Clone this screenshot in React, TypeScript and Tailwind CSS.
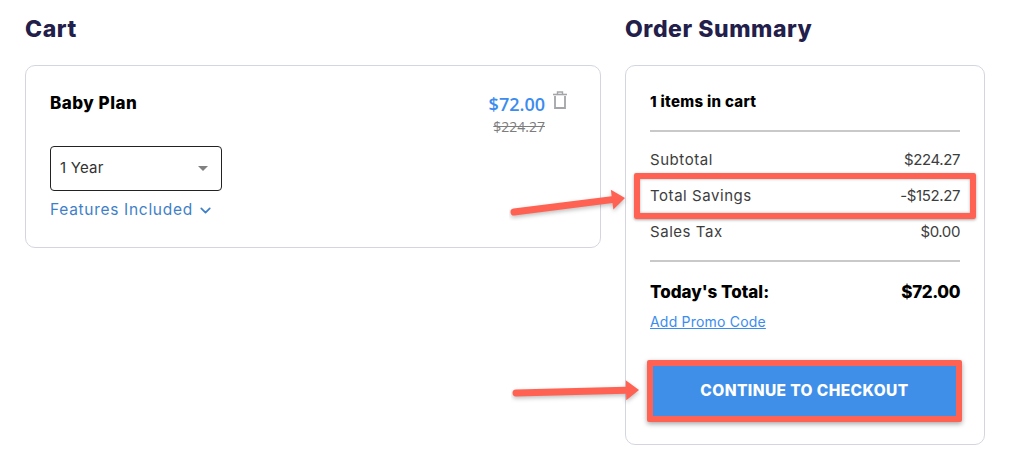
import { ChevronDown } from "lucide-react";

const Arrow = ({ className, x2, y1, y2, w, h }: { className: string; x2: number; y1: number; y2: number; w: number; h: number }) => {
  const dx = x2 - 5;
  const dy = y2 - y1;
  const len = Math.sqrt(dx * dx + dy * dy);
  const ux = dx / len;
  const uy = dy / len;
  const bx = x2 - ux * 13;
  const by = y2 - uy * 13;
  const px = -uy * 10;
  const py = ux * 10;
  return (
    <svg className={className} width={w} height={h} viewBox={`0 0 ${w} ${h}`} fill="none">
      <g filter="drop-shadow(0 2px 2px rgba(0,0,0,0.25))">
        <line x1="5" y1={y1} x2={bx} y2={by} stroke="#ff6252" strokeWidth="7" strokeLinecap="round" />
        <polygon points={`${x2},${y2} ${bx + px},${by + py} ${bx - px},${by - py}`} fill="#ff6252" />
      </g>
    </svg>
  );
};

const Row = ({ label, value }: { label: string; value: string }) => (
  <div className="flex h-9 items-center justify-between text-[15px] text-[#3d3d3d]">
    <span className="tracking-[0.55px]">{label}</span>
    <span className="tracking-[-0.4px]">{value}</span>
  </div>
);

export default function App() {
  return (
    <div className="relative flex h-[464px] w-[1016px] gap-6 overflow-hidden bg-white pl-[25px] font-['Inter',sans-serif]">
      <section className="w-[576px]">
        <h2 className="flex h-[65px] items-start pt-[12px] text-[23px] font-extrabold leading-[34px] tracking-[0.55px] text-[#22204a]">Cart</h2>
        <div className="h-[183px] rounded-[10px] border border-[#d3d6e2] pl-6 pr-[32px] pt-6">
          <div className="flex items-start justify-between">
            <h3 className="text-[17px] font-extrabold leading-[26px] tracking-[0.5px] text-black">Baby Plan</h3>
            <div className="flex flex-col items-end">
              <div className="flex items-start gap-[7px]">
                <span className="font-['Open_Sans',sans-serif] text-[18px] font-semibold leading-[28px] text-[#3b8cee]">$72.00</span>
                <svg width="16" height="18" viewBox="0 0 16 18" fill="none" stroke="#a3a5a8" className="mt-[1px]">
                  <path d="M1 3.5h14" strokeWidth="1.6" />
                  <path d="M5.5 3V1h5v2" strokeWidth="1.4" />
                  <path d="M3 5v12h10V5" strokeWidth="1.8" />
                </svg>
              </div>
              <span className="mr-[23px] font-['Open_Sans',sans-serif] text-[14px] leading-[18px] text-[#7d7d7d] line-through">$224.27</span>
            </div>
          </div>
          <div className="mt-[10px] flex h-[45px] w-[172px] items-center justify-between rounded-[4px] border border-[#222] pl-[9px] pr-[13px] text-[15px] tracking-[0.2px] text-[#333]">
            <span>1 Year</span>
            <span className="h-0 w-0 border-x-[5px] border-t-[5px] border-x-transparent border-t-[#808080]" />
          </div>
          <div className="mt-[8px] flex items-center gap-[4px] text-[15.5px] leading-[22px] tracking-[0.7px] text-[#3f7fc9]">
            <span>Features Included</span>
            <ChevronDown size={17} strokeWidth={2.4} />
          </div>
        </div>
      </section>

      <section className="w-[360px]">
        <h2 className="flex h-[65px] items-start pt-[12px] text-[23px] font-extrabold leading-[34px] tracking-[0.55px] text-[#22204a]">Order Summary</h2>
        <div className="h-[380px] rounded-[10px] border border-[#d3d6e2] px-6 pt-[24px]">
          <div className="text-[15px] font-extrabold leading-6 tracking-[0.3px] text-black">1 items in cart</div>
          <div className="mt-[16px] h-[2px] bg-[#c9c9c9]" />
          <div className="mt-[10px]">
            <Row label="Subtotal" value="$224.27" />
            <div className="relative">
              <Row label="Total Savings" value="-$152.27" />
              <div className="absolute -inset-x-[16px] -inset-y-[5px] rounded-[2px] border-[6px] border-[#ff6252] shadow-[0_1px_3px_rgba(0,0,0,0.35),inset_0_0_3px_rgba(0,0,0,0.3)]" />
            </div>
            <Row label="Sales Tax" value="$0.00" />
          </div>
          <div className="mt-[10px] h-[2px] bg-[#c9c9c9]" />
          <div className="mt-[18px] flex items-center justify-between text-[17px] font-extrabold leading-6 text-black">
            <span>Today's Total:</span>
            <span className="tracking-[-0.4px]">$72.00</span>
          </div>
          <a className="mt-2 block text-[14px] leading-5 tracking-[0.2px] text-[#3b8cee] underline">Add Promo Code</a>
          <button className="-mx-[3px] mt-[28px] flex h-[62px] w-[315px] items-center justify-center rounded-[2px] border-[6px] border-[#ff6252] bg-[#3f8fe9] text-[15.5px] font-extrabold tracking-[0.4px] text-white shadow-[0_2px_5px_rgba(0,0,0,0.35)]">
            CONTINUE TO CHECKOUT
          </button>
        </div>
      </section>

      <Arrow className="absolute left-[509px] top-[185px]" w={121} h={36} x2={116} y1={27} y2={13} />
      <Arrow className="absolute left-[511px] top-[375px]" w={133} h={30} x2={128} y1={18} y2={15} />
    </div>
  );
}
